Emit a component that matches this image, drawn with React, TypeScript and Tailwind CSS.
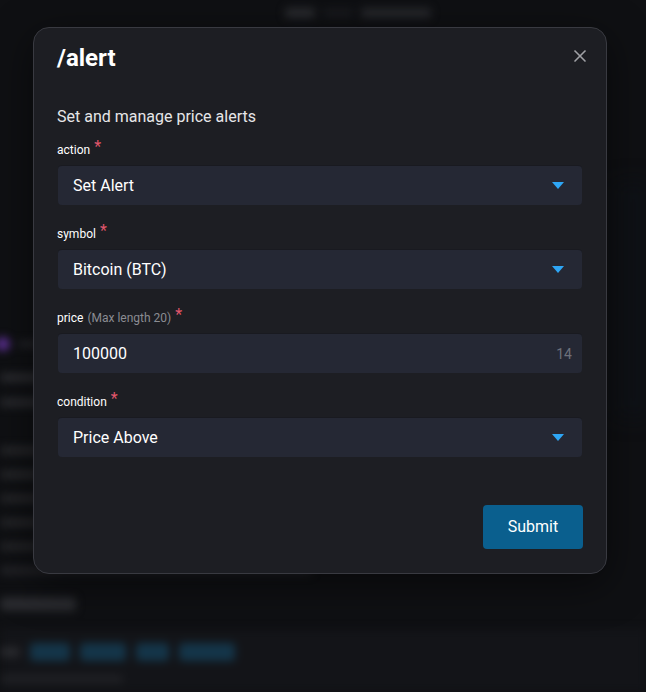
import { X } from 'lucide-react';

const fields = [
    { name: 'action', value: 'Set Alert', kind: 'select' },
    { name: 'symbol', value: 'Bitcoin (BTC)', kind: 'select' },
    { name: 'price', value: '100000', kind: 'input', hint: '(Max length 20)', count: '14' },
    { name: 'condition', value: 'Price Above', kind: 'select' },
];

const Caret = () => (
    <svg width="12" height="7" viewBox="0 0 12 7" className="shrink-0">
        <path d="M0 0 L12 0 L6 7 Z" fill="#2ea6f5" />
    </svg>
);

const Backdrop = () => (
    <div className="flex h-full flex-col blur-[4px]">
        {/* top header */}
        <div className="flex h-[26px] items-center justify-center pl-[70px]">
            <div className="h-[10px] w-[30px] rounded bg-[#2a2b2f]" />
            <div className="ml-2 h-[6px] w-[30px] rounded bg-[#1c1d21]" />
            <div className="ml-2 h-[10px] w-[70px] rounded bg-[#26272b]" />
        </div>

        {/* left column, mostly hidden by the dialog */}
        <div className="flex flex-col pt-[311px]">
            <div className="flex h-[14px] items-center gap-2">
                <div className="-ml-[4px] h-[14px] w-[14px] rounded-full bg-[#5a2f8f]" />
                <div className="h-[6px] w-[40px] rounded bg-[#26272c]" />
            </div>
            <div className="mt-[22px] h-[9px] w-[60px] rounded bg-[#2a2b2f]" />
            <div className="mt-[16px] h-[9px] w-[60px] rounded bg-[#28292d]" />
            <div className="mt-[39px] flex flex-col gap-[15px]">
                <div className="h-[9px] w-[60px] rounded bg-[#252629]" />
                <div className="h-[9px] w-[60px] rounded bg-[#252629]" />
                <div className="h-[9px] w-[60px] rounded bg-[#242528]" />
                <div className="h-[9px] w-[60px] rounded bg-[#242528]" />
                <div className="h-[9px] w-[60px] rounded bg-[#232427]" />
                <div className="h-[9px] w-[312px] rounded bg-[#212226]" />
            </div>
            <div className="mt-[22px] h-[14px] w-[76px] rounded bg-[#2a2b2f]" />
        </div>

        {/* command list */}
        <div className="mt-[18px] flex-1 border-t border-[#17181c] bg-[#131418] pt-[13px]">
            <div className="flex items-center gap-[10px]">
                <div className="h-[10px] w-[20px] rounded bg-[#28292d]" />
                <div className="h-[18px] w-[40px] rounded bg-[#143549]" />
                <div className="h-[18px] w-[46px] rounded bg-[#143549]" />
                <div className="h-[18px] w-[33px] rounded bg-[#143549]" />
                <div className="h-[18px] w-[56px] rounded bg-[#143549]" />
            </div>
            <div className="mt-[14px] h-[8px] w-[123px] rounded bg-[#202125]" />
        </div>
    </div>
);

export default function App() {
    return (
        <div className="relative h-[692px] w-[646px] overflow-hidden bg-[#0f1013] font-['Roboto','Liberation_Sans',sans-serif]">
            <Backdrop />
            <div className="pointer-events-none absolute right-0 top-[180px] h-[240px] w-[50px] bg-gradient-to-l from-[#0e141c]/50 to-transparent blur-[10px]" />

            {/* Dialog */}
            <div className="absolute left-[33px] top-[27px] w-[574px] rounded-2xl border border-[#393a41] bg-[#1d1e23] px-6 pb-6 pt-[14px] shadow-[0_10px_40px_rgba(0,0,0,0.5)]">
                <div className="flex items-start justify-between">
                    <h2 className="-ml-px text-2xl leading-8 font-bold text-white">/alert</h2>
                    <X size={20} strokeWidth={2} className="mr-[-8px] mt-[4px] text-[#a0a1a6]" />
                </div>

                <p className="mt-[31px] -ml-px text-base leading-6 text-[#e6e6e8]">Set and manage price alerts</p>

                <div className="mt-[13px] flex flex-col gap-[21px]">
                    {fields.map((f) => (
                        <div key={f.name} className="flex flex-col gap-[7px]">
                            <div className="-ml-px flex h-4 items-center text-xs text-white">
                                <span>{f.name}</span>
                                {f.hint && <span className="ml-1 text-[#8b8c92]">{f.hint}</span>}
                                <span className="ml-1 -mt-[6px] text-base leading-4 text-[#e0566b]">*</span>
                            </div>
                            <div className="flex h-10 items-center justify-between rounded border-t border-[#191a20] bg-[#252834] pl-[15px] pr-[18px]">
                                <span className="text-base text-white">{f.value}</span>
                                {f.kind === 'select' ? <Caret /> : <span className="mr-[-8px] text-sm text-[#6d707a]">{f.count}</span>}
                            </div>
                        </div>
                    ))}
                </div>

                <div className="mt-12 flex justify-end">
                    <button className="-mr-px h-11 w-[100px] rounded bg-[#0a5f8e] text-base text-white">Submit</button>
                </div>
            </div>
        </div>
    );
}
